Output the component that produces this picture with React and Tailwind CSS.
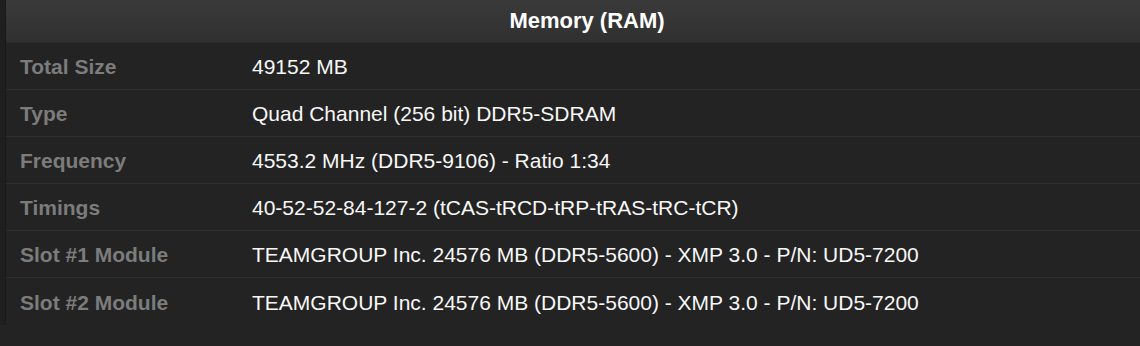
export default function App() {
  const rows = [
    ["Total Size", "49152 MB"],
    ["Type", "Quad Channel (256 bit) DDR5-SDRAM"],
    ["Frequency", "4553.2 MHz (DDR5-9106) - Ratio 1:34"],
    ["Timings", "40-52-52-84-127-2 (tCAS-tRCD-tRP-tRAS-tRC-tCR)"],
    ["Slot #1 Module", "TEAMGROUP Inc. 24576 MB (DDR5-5600) - XMP 3.0 - P/N: UD5-7200"],
    ["Slot #2 Module", "TEAMGROUP Inc. 24576 MB (DDR5-5600) - XMP 3.0 - P/N: UD5-7200"],
  ];
  return (
    <div
      className="w-[1140px] h-[346px] bg-[#232323] overflow-hidden"
      style={{ fontFamily: '"Liberation Sans", Arial, sans-serif' }}
    >
      <div className="flex h-[325px]">
        <div className="w-[6px] shrink-0 bg-[#1f1f1f] border-r border-[#191919]" />
        <div className="w-[1162px] shrink-0 flex flex-col">
          <div className="h-[43px] shrink-0 flex items-center justify-center bg-gradient-to-b from-[#3a3a3a] to-[#303030] border-b border-[#2a2a2a]">
            <span className="text-[22px] font-bold text-white leading-none">Memory (RAM)</span>
          </div>
          {rows.map(([k, v], i) => (
            <div
              key={i}
              className={
                "h-[47px] shrink-0 flex items-center pt-[2px] bg-[#232323] " +
                (i < rows.length - 1 ? "border-b border-[#2f2f2f]" : "")
              }
            >
              <div className="w-[246px] pl-[14px] text-[21px] font-bold text-[#7c7c7c]">{k}</div>
              <div className="text-[21px] text-[#f7f7f7]">{v}</div>
            </div>
          ))}
        </div>
      </div>
    </div>
  );
}
